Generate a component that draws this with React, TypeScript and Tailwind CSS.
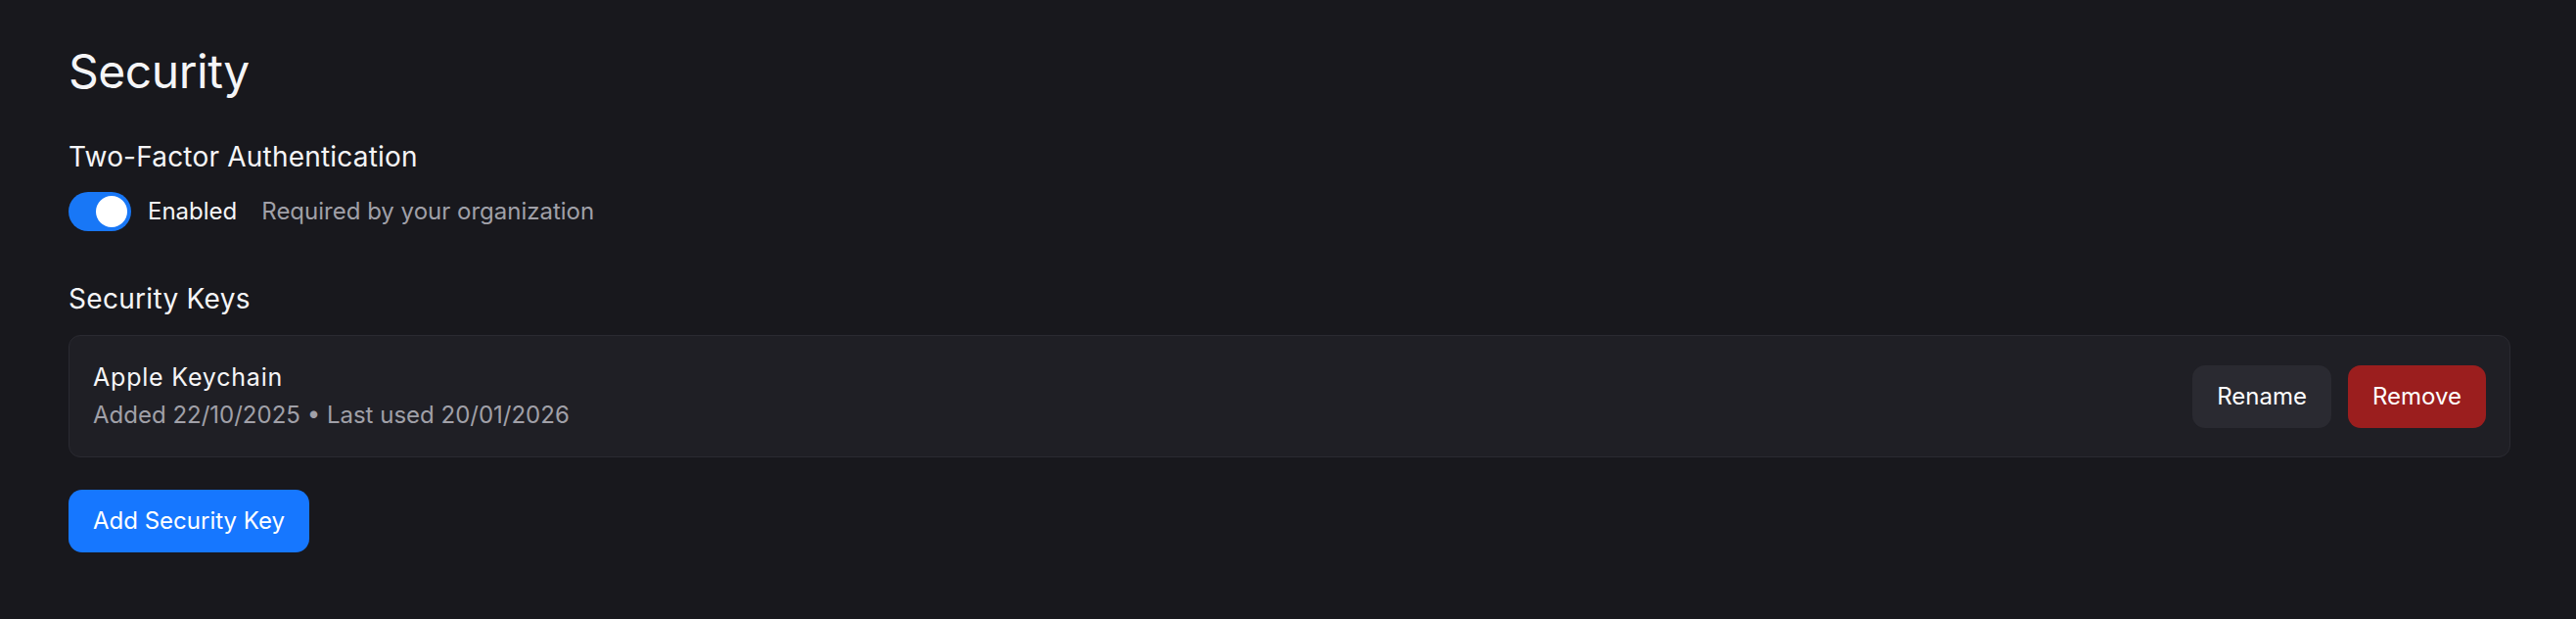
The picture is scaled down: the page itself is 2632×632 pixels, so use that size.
const securityKeys = [
  {
    name: "Apple Keychain",
    added: "22/10/2025",
    lastUsed: "20/01/2026",
  },
];

function Toggle({ on }: { on: boolean }) {
  return (
    <button
      type="button"
      role="switch"
      aria-checked={on}
      className={[
        "flex h-[40px] w-[64px] shrink-0 items-center rounded-full px-[4px]",
        on ? "justify-end bg-[#1877f6]" : "justify-start bg-[#3a3a42]",
      ].join(" ")}
    >
      <span className="h-[32px] w-[32px] rounded-full bg-white" />
    </button>
  );
}

export default function App() {
  return (
    <div
      className="min-h-[632px] bg-[#18181d] pl-[70px] pr-[67px] pt-[44px] text-[#f5f5f7]"
      style={{ fontFamily: "Inter, 'Noto Sans', sans-serif" }}
    >
      <h1 className="text-[48px] leading-[58px] font-normal tracking-[-0.01em]">
        Security
      </h1>

      <section className="mt-[40px]">
        <h2 className="text-[28px] leading-[36px] font-normal tracking-[0.2px]">
          Two-Factor Authentication
        </h2>

        <div className="mt-[18px] flex items-center">
          <Toggle on />
          <span className="ml-[17px] text-[24px] leading-[36px]">Enabled</span>
          <span className="ml-[25px] text-[24px] leading-[36px] text-[#a0a0a8]">
            Required by your organization
          </span>
        </div>
      </section>

      <section className="mt-[51px]">
        <h2 className="text-[28px] leading-[36px] font-normal tracking-[0.3px]">
          Security Keys
        </h2>

        <div className="mt-[19px] space-y-3">
          {securityKeys.map((key) => (
            <div
              key={key.name}
              className="flex items-center justify-between rounded-[12px] border-[1.5px] border-[#2a2a31] bg-[#1f1f25] px-[24px] py-[24px]"
            >
              <div>
                <p className="text-[25px] leading-[36px] font-normal tracking-[0.8px]">
                  {key.name}
                </p>
                <p className="mt-[3px] text-[24px] leading-[36px] text-[#a0a0a8]">
                  Added {key.added} • Last used {key.lastUsed}
                </p>
              </div>

              <div className="flex items-center gap-[17px]">
                <button
                  type="button"
                  className="h-[64px] rounded-[13px] bg-[#2a2a31] px-[25px] text-[24px] font-normal text-white"
                >
                  Rename
                </button>
                <button
                  type="button"
                  className="h-[64px] rounded-[13px] bg-[#9b1e1e] px-[25px] text-[24px] font-normal text-white"
                >
                  Remove
                </button>
              </div>
            </div>
          ))}
        </div>

        <button
          type="button"
          className="mt-[33px] h-[64px] rounded-[14px] bg-[#1677ff] px-[25px] text-[24px] font-normal text-white"
        >
          Add Security Key
        </button>
      </section>
    </div>
  );
}
